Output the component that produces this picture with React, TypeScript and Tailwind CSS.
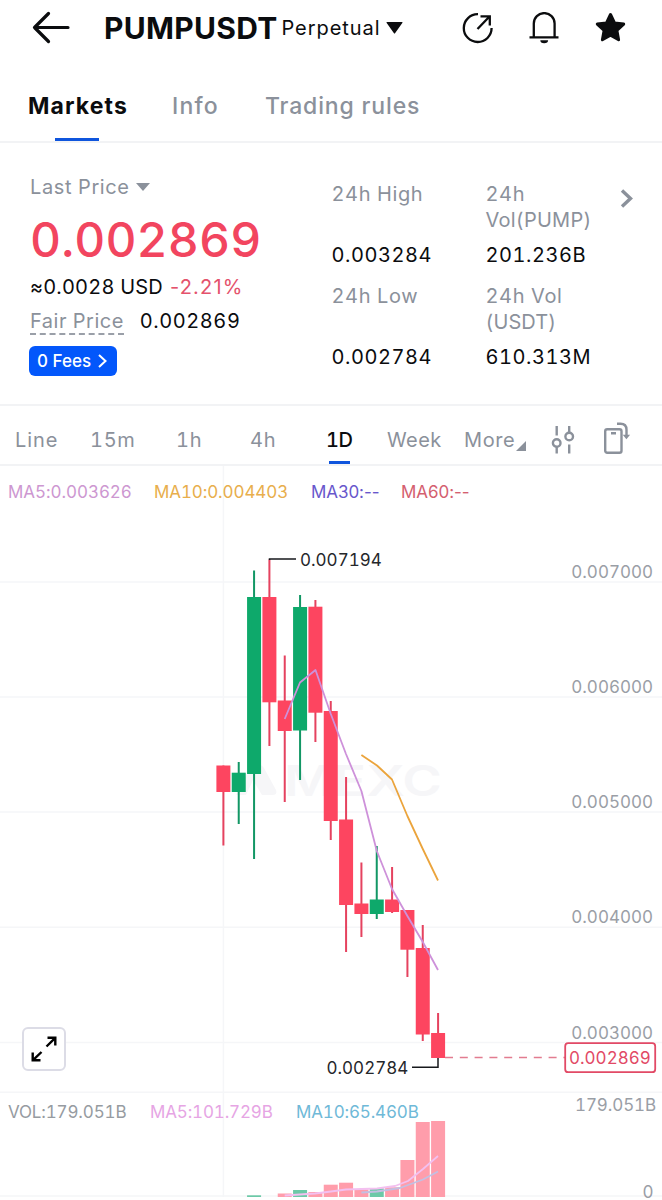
import React from 'react'

interface Candle {
  up?: boolean
  high: number
  top: number
  bottom: number
  low: number
  vol?: number
}

const FIRST_X = 223.4
const STEP = 15.335
const VOL_BASE = 1197

const candles: Candle[] = [
  { high: 765.5, top: 765.5, bottom: 792, low: 845.5 },
  { up: true, high: 762, top: 772.7, bottom: 792, low: 824 },
  { up: true, high: 570.5, top: 597, bottom: 774, low: 859, vol: 1195.3 },
  { high: 559.5, top: 597, bottom: 702.3, low: 746 },
  { high: 655.5, top: 700.5, bottom: 731, low: 802, vol: 1193.5 },
  { up: true, high: 595, top: 607, bottom: 730.5, low: 780, vol: 1190 },
  { high: 600, top: 606.7, bottom: 712.7, low: 742, vol: 1192 },
  { high: 701, top: 711, bottom: 821, low: 840, vol: 1184.7 },
  { high: 777, top: 819.5, bottom: 905, low: 952, vol: 1182.7 },
  { high: 862.5, top: 903.5, bottom: 914, low: 937, vol: 1189.5 },
  { up: true, high: 846, top: 899.5, bottom: 914, low: 919, vol: 1188.3 },
  { high: 867, top: 899.5, bottom: 912, low: 913, vol: 1187.3 },
  { high: 910, top: 910, bottom: 949.7, low: 977, vol: 1160 },
  { high: 925, top: 948, bottom: 1034.5, low: 1041, vol: 1122 },
  { high: 1013, top: 1033, bottom: 1058, low: 1058, vol: 1121 },
]

const priceLabels = [
  { y: 582, text: '0.007000' },
  { y: 697, text: '0.006000' },
  { y: 812, text: '0.005000' },
  { y: 927.3, text: '0.004000' },
  { y: 1042.5, text: '0.003000' },
]

const candleX = (index: number) => FIRST_X + index * STEP

const Header: React.FC = () => (
  <header className="flex h-[56px] items-center pl-[32px] pr-[36px] text-[#0b0c0e]">
    <svg className="h-[34px] w-[40px] shrink-0" viewBox="0 0 40 34" fill="none" stroke="currentColor" strokeWidth="3.2" strokeLinecap="round" strokeLinejoin="round">
      <path d="M16.5 2.500 2.500 16.500l14 14M2.500 16.500h33.500" />
    </svg>
    <h1 className="ml-[32px] w-[177.500px] shrink-0 whitespace-nowrap text-[30px] font-bold leading-none tracking-[0.3px]">PUMPUSDT</h1>
    <span className="w-[104px] shrink-0 whitespace-nowrap text-[20px] leading-none tracking-[0.95px]">Perpetual</span>
    <svg className="h-[12px] w-[17px] shrink-0" viewBox="0 0 17 12" fill="currentColor">
      <path d="M1 0h15q1 0 .3 1L9.200 11q-.7 1-1.400 0L.7 1Q0 0 1 0Z" />
    </svg>
    <div className="ml-auto flex items-center gap-[34px]">
      <svg className="size-[33px]" viewBox="0 0 33 33" fill="none" stroke="currentColor" strokeWidth="2.300">
        <path d="M17 2.200A13.900 13.900 0 1 0 30.600 16.100" />
        <path d="M16.500 17 28 5M19.500 4.300h9.300v9.200" />
      </svg>
      <svg className="size-[32px]" viewBox="0 0 32 32" fill="none" stroke="currentColor" strokeWidth="2.300">
        <path d="M5.800 25V11.500a10.400 10.400 0 0 1 20.800 0V25M1.500 25.400h29" />
        <path d="M12.300 28.300h7.800a3.900 2.900 0 0 1-7.800 0Z" fill="currentColor" stroke="none" />
      </svg>
      <svg className="size-[32px]" viewBox="0 0 32 32" fill="currentColor" stroke="currentColor" strokeWidth="3" strokeLinejoin="round">
        <path d="m16.500 2.500 4 8.400 9.200 1.200-6.800 6.300 1.700 9.300-8.100-4.400-8.100 4.400 1.700-9.300-6.800-6.300 9.200-1.200Z" />
      </svg>
    </div>
  </header>
)

const Tabs: React.FC = () => (
  <nav className="flex h-[87px] items-end border-b-2 border-[#f2f3f5] pl-[28px] text-[23px] font-medium leading-[30px] text-[#8b919b]">
    <div className="flex w-[144px] flex-col">
      <span className="font-bold tracking-[1.100px] text-[#0b0c0e]">Markets</span>
      <span className="ml-[27px] mt-[17px] h-[3px] w-[44px] bg-[#0f55dd]" />
    </div>
    <span className="w-[93px] pb-[20px] tracking-[1.200px]">Info</span>
    <span className="pb-[20px] tracking-[0.850px]">Trading rules</span>
  </nav>
)

const Stat: React.FC<{ label: React.ReactNode; value: string }> = ({ label, value }) => (
  <div className="h-[102px] text-[20px] leading-[26px]">
    <div className="h-[61px] tracking-[0.600px] text-[#8b919b]">{label}</div>
    <div className="tracking-[0.550px]">{value}</div>
  </div>
)

const Summary: React.FC = () => (
  <section className="flex h-[263px] border-b-2 border-[#f2f3f5] text-[20px] tabular-nums text-[#0b0c0e]">
    <div className="w-[331.500px] pl-[30px] pt-[31px]">
      <div className="flex h-[26px] items-center text-[#8b919b]">
        <span className="tracking-[0.600px]">Last Price</span>
        <svg className="ml-[6px] h-[8px] w-[14px]" viewBox="0 0 14 8" fill="currentColor">
          <path d="M0 0h14L7 8Z" />
        </svg>
      </div>
      <div className="mt-[16px] h-[48px] text-[48px] font-medium leading-[48px] tracking-[0.100px] text-[#f2455f]">0.002869</div>
      <div className="mt-[10px] flex h-[26px] items-center whitespace-nowrap">
        <span className="w-[140px] tracking-[0.200px]">≈0.0028 USD</span>
        <span className="proportional-nums tracking-[1.200px] text-[#e4526c]">-2.21%</span>
      </div>
      <div className="mt-[8px] flex h-[27px] items-start whitespace-nowrap leading-[26px]">
        <span className="mr-[16px] h-[27px] border-b-2 border-dashed border-[#9a9fa8] tracking-[0.500px] text-[#8b919b]">Fair Price</span>
        <span className="tracking-[0.550px]">0.002869</span>
      </div>
      <button type="button" className="-ml-px mt-[11px] flex h-[30px] w-[88px] items-center rounded-[6px] bg-[#0357fb] pl-[8px] pt-[2px] text-[17px] font-medium text-white">
        0 Fees
        <svg className="-mt-[2px] ml-[7px] h-[14px] w-[9px]" viewBox="0 0 9 14" fill="none" stroke="currentColor" strokeWidth="2">
          <path d="m1 1 6.500 6L1 13" />
        </svg>
      </button>
    </div>
    <div className="w-[154px] pt-[38px]">
      <Stat label="24h High" value="0.003284" />
      <Stat label="24h Low" value="0.002784" />
    </div>
    <div className="w-[133px] pt-[38px]">
      <Stat label={<>24h<br /><span className="tracking-[0.250px]">Vol(PUMP)</span></>} value="201.236B" />
      <Stat label={<>24h Vol<br /><span className="tracking-[0.100px]">(USDT)</span></>} value="610.313M" />
    </div>
    <svg className="ml-[1px] mt-[46px] h-[19px] w-[14px]" viewBox="0 0 14 19" fill="none" stroke="#8b919b" strokeWidth="3.400">
      <path d="m2 1.500 8.500 8L2 17.500" />
    </svg>
  </section>
)

const Intervals: React.FC = () => (
  <nav className="flex h-[60px] items-center border-b-2 border-[#f2f3f5] pl-[15px] pt-[9px] text-[20px] tabular-nums text-[#8b919b]">
    <span className="w-[75px] tracking-[0.900px]">Line</span>
    <span className="w-[86px] tracking-[0.700px]">15m</span>
    <span className="w-[74px] tracking-[0.700px]">1h</span>
    <span className="w-[76px] tracking-[0.900px]">4h</span>
    <div className="flex h-full w-[61px] flex-col pt-[10px]">
      <span className="h-[37px] font-medium leading-[30px] tracking-[-0.400px] text-[#0b0c0e]">1D</span>
      <span className="ml-[3px] h-[3px] w-[21px] shrink-0 bg-[#0f55dd]" />
    </div>
    <span className="w-[77px] tracking-[0.400px]">Week</span>
    <span className="w-[52px] tracking-[0.600px]">More</span>
    <svg className="mt-[12px] h-[10px] w-[10px]" viewBox="0 0 10 10" fill="currentColor">
      <path d="M10 0v10H0Z" />
    </svg>
    <svg className="ml-[25px] h-[28px] w-[24px]" viewBox="0 0 24 28" fill="none" stroke="currentColor" strokeWidth="2.400">
      <path d="M5.700 0v9.500M5.700 21v6.500M18.200 0v7M18.200 18.500v9" />
      <circle cx="5.700" cy="17" r="3.800" />
      <circle cx="18.200" cy="10.500" r="3.800" />
    </svg>
    <svg className="-mt-[2px] ml-[28px] h-[33px] w-[28px]" viewBox="0 0 28 33" fill="none" stroke="currentColor" strokeWidth="2.400">
      <rect x="2.200" y="7.200" width="16.300" height="23.600" rx="2" />
      <path d="M8 11.300h5M14 1.700h3.500q6 0 6 6v7" />
      <path d="M19.700 12.800h7.400l-3.700 4.400Z" fill="currentColor" stroke="none" />
    </svg>
  </nav>
)

const Chart: React.FC = () => (
  <section className="relative h-[734px] tabular-nums">
    <svg className="block h-[734px] w-[662px]" viewBox="0 466 662 734" fill="none">
      <g stroke="#f5f6f8" strokeWidth="1.500">
        {priceLabels.map(({ y }) => (
          <path key={y} d={`M0 ${y}H662`} />
        ))}
        <path d="M223.400 466V1197M0 1092.300H662M0 1196H662" />
      </g>

      {/* watermark */}
      <g fill="#f6f6f8">
        <path d="M236 795l14-27q3-5 7 0l16 27h-11l-9-15-7 15Z" />
        <path d="M257 766q4-3 7 2l12 22q2 5-4 5h-3Z" />
        <text x="284" y="795.500" fontSize="42" fontWeight="600" textLength="158" lengthAdjust="spacingAndGlyphs">MEXC</text>
      </g>

      {candles.map(({ up, high, top, bottom, low, vol }, i) => (
        <g key={i} fill={up ? '#0ea96b' : '#fd4560'}>
          <rect x={candleX(i) - 1} y={high} width="2" height={low - high} fill={up ? '#129765' : '#e5425f'} />
          <rect x={candleX(i) - 7} y={top} width="14" height={bottom - top} />
          {vol && <rect x={candleX(i) - 7} y={vol} width="14" height={VOL_BASE - vol} fill={up ? '#6cc9a7' : '#ff9dab'} />}
        </g>
      ))}

      <g strokeWidth="1.800" strokeLinejoin="round">
        <path stroke="#ce91da" d="M284.700 719 300 682.500 315.500 670 330.800 714 346 754 361.400 791 376.800 851 392 889 407.400 916 422.800 942 438 970" />
        <path stroke="#eba43c" d="M361.400 755 377 765.500 392 779.500 407.400 816 422.800 849 438 880.500" />
        <path stroke="#f3c0f0" d="M284.700 1195.500 315 1193.500 331 1191.500 346 1189.500 377 1188.500 395 1186 408 1181 423 1169 438 1156" />
        <path stroke="#c3bfe2" d="M361.400 1192.500 377 1191.500 400 1188 423 1179.500 438 1171.500" />
      </g>

      <g stroke="#17191c" strokeWidth="1.500">
        <path d="M269.500 560V559H296M438 1058V1067.300H412" />
      </g>
      <path d="M445 1057.500H565" stroke="#e27c90" strokeWidth="1.500" strokeDasharray="8 6.800" />

      <g fill="#25272b" fontSize="17">
        <text x="300" y="565.500">0.007194</text>
        <text x="326.500" y="1073.500">0.002784</text>
      </g>
      <g fill="#9a9ea6" fontSize="17" textAnchor="end">
        {priceLabels.map(({ y, text }) => (
          <text key={text} x="653" y={y - 4}>{text}</text>
        ))}
        <text x="656" y="1111" letterSpacing="-0.100">179.051B</text>
        <text x="653.500" y="1197.500">0</text>
      </g>

      <rect x="565.200" y="1043.200" width="90" height="29" rx="3" fill="#fff" stroke="#e24a66" strokeWidth="1.800" />
      <text x="569" y="1064" fill="#e24a66" fontSize="17">0.002869</text>
    </svg>

    <div className="absolute left-[8px] top-[14px] flex whitespace-nowrap text-[17px] leading-[24px] tracking-[-0.050px]">
      <span className="w-[146px] text-[#cd97d1]">MA5:0.003626</span>
      <span className="w-[157px] tracking-[-0.100px] text-[#e8ae4c]">MA10:0.004403</span>
      <span className="w-[90px] proportional-nums text-[#6857cc]">MA30:--</span>
      <span className="proportional-nums text-[#d4606f]">MA60:--</span>
    </div>
    <div className="absolute left-[8px] top-[634px] flex whitespace-nowrap text-[17px] leading-[24px] tracking-[-0.150px]">
      <span className="w-[142px] text-[#969ba1]">VOL:179.051B</span>
      <span className="w-[146px] text-[#e6a5e4]">MA5:101.729B</span>
      <span className="text-[#6fb9d8]">MA10:65.460B</span>
    </div>
    <button type="button" aria-label="Fullscreen" className="absolute left-[22px] top-[561px] flex size-[44px] items-center justify-center rounded-[6px] border-2 border-[#dcdce6] bg-white">
      <svg className="size-[26px]" viewBox="0 0 26 26" fill="none" stroke="#000" strokeWidth="2.400">
        <path d="M15.500 10.500 24 2.200M16.500 1.700h7.800v7.800M10.500 16 2 24.200M1.700 16.500v7.800h7.800" />
      </svg>
    </button>
  </section>
)

export default function App() {
  return (
    <main className="h-[1200px] w-[662px] overflow-hidden bg-white font-[Inter,'Liberation_Sans',sans-serif]">
      <Header />
      <Tabs />
      <Summary />
      <Intervals />
      <Chart />
    </main>
  )
}
